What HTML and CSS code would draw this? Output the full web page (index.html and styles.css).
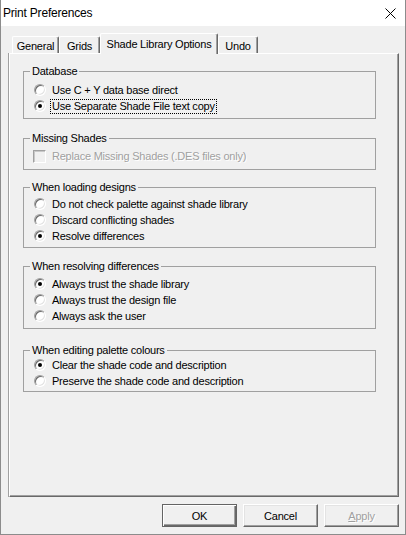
FILE: index.html
```html
<!DOCTYPE html>
<html>
<head>
<meta charset="utf-8">
<link rel="stylesheet" href="styles.css">
</head>
<body>
<div class="window">
  <div class="titlebar">
    <span class="title">Print Preferences</span>
    <svg class="close" width="11" height="11" viewBox="0 0 11 11"><path d="M0.5 0.5 L10.5 10.5 M10.5 0.5 L0.5 10.5" stroke="#000" stroke-width="1" fill="none"/></svg>
  </div>
  <div class="content">
    <div class="tabs">
      <div class="tab w-general">General</div>
      <div class="tab w-grids">Grids</div>
      <div class="tab active w-shade">Shade Library Options</div>
      <div class="tab w-undo">Undo</div>
    </div>
    <div class="panel">
      <fieldset class="group g-db">
        <legend>Database</legend>
        <div class="opts">
          <div class="opt"><span class="radio"></span><span class="lbl">Use C + Y data base direct</span></div>
          <div class="opt"><span class="radio on"></span><span class="lbl focus">Use Separate Shade File text copy</span></div>
        </div>
      </fieldset>
      <fieldset class="group g-missing">
        <legend>Missing Shades</legend>
        <div class="opts">
          <div class="opt"><span class="check"></span><span class="lbl disabled">Replace Missing Shades (.DES files only)</span></div>
        </div>
      </fieldset>
      <fieldset class="group g-load">
        <legend>When loading designs</legend>
        <div class="opts">
          <div class="opt"><span class="radio"></span><span class="lbl">Do not check palette against shade library</span></div>
          <div class="opt"><span class="radio"></span><span class="lbl">Discard conflicting shades</span></div>
          <div class="opt"><span class="radio on"></span><span class="lbl">Resolve differences</span></div>
        </div>
      </fieldset>
      <fieldset class="group g-resolve">
        <legend>When resolving differences</legend>
        <div class="opts">
          <div class="opt"><span class="radio on"></span><span class="lbl">Always trust the shade library</span></div>
          <div class="opt"><span class="radio"></span><span class="lbl">Always trust the design file</span></div>
          <div class="opt"><span class="radio"></span><span class="lbl">Always ask the user</span></div>
        </div>
      </fieldset>
      <fieldset class="group g-edit">
        <legend>When editing palette colours</legend>
        <div class="opts">
          <div class="opt"><span class="radio on"></span><span class="lbl">Clear the shade code and description</span></div>
          <div class="opt"><span class="radio"></span><span class="lbl">Preserve the shade code and description</span></div>
        </div>
      </fieldset>
    </div>
    <div class="buttons">
      <div class="btn default">OK</div>
      <div class="btn">Cancel</div>
      <div class="btn disabled"><span><u>A</u>pply</span></div>
    </div>
  </div>
</div>
</body>
</html>
```
FILE: styles.css
```css
* { box-sizing: border-box; }
body {
  margin: 0;
  background: #fff;
  font-family: "Liberation Sans", Arial, sans-serif;
  font-size: 11px;
  letter-spacing: -0.22px;
  color: #000;
}
.window {
  width: 406px;
  height: 535px;
  background: #f0f0f0;
  border: 1px solid #8c8c8c;
  border-top: none;
  display: flex;
  flex-direction: column;
}
.titlebar {
  height: 26px;
  background: #fff;
  display: flex;
  align-items: center;
  justify-content: space-between;
  padding: 0 9px 0 2px;
  flex: none;
}
.title {
  font-size: 12px;
  letter-spacing: -0.2px;
}
.close { display: block; }
.content {
  flex: 1;
  display: flex;
  flex-direction: column;
  padding: 7px 6px 0 7px;
}
.tabs {
  display: flex;
  align-items: flex-end;
  height: 20px;
  padding-left: 4px;
}
.tab {
  height: 17px;
  border: 1px solid;
  border-color: #fff #696969 transparent #fff;
  border-bottom: none;
  border-radius: 2px 2px 0 0;
  box-shadow: inset -1px 0 0 #a0a0a0;
  display: flex;
  align-items: center;
  justify-content: center;
  padding-top: 1px;
}
.tab.active {
  height: 21px;
  margin-bottom: -1px;
  padding-bottom: 1px;
  position: relative;
  z-index: 1;
  background: #f0f0f0;
}
.w-general { width: 47px; }
.w-grids { width: 41px; }
.w-shade { width: 118px; }
.w-undo { width: 40px; }
.panel {
  height: 444px;
  margin-left: 1px;
  border: 1px solid;
  border-color: #fff #696969 #696969 #fff;
  box-shadow: inset -1px -1px 0 #a0a0a0, -1px 0 0 #a0a0a0;
  padding: 10px 0 0 13px;
}
.group {
  margin: 0;
  padding: 0;
  border: 1px solid #a0a0a0;
  width: 353px;
  min-width: 0;
}
.group legend {
  margin-left: 6px;
  padding: 0 2px;
  line-height: 14px;
}
.opts { padding-left: 10px; }
.g-db .opts { padding-top: 4px; padding-bottom: 4px; }
.g-missing { margin-top: 12px; }
.g-missing .opts { padding-top: 3px; padding-bottom: 5px; }
.g-load { margin-top: 10px; }
.g-load .opts { padding-top: 2px; padding-bottom: 3px; }
.g-resolve { margin-top: 11px; }
.g-resolve .opts { padding-top: 3px; padding-bottom: 4px; }
.g-edit { margin-top: 14px; }
.g-edit .opts { padding-top: 0; padding-bottom: 2px; }
.opt {
  display: flex;
  align-items: center;
  height: 16px;
}
.radio {
  width: 12px;
  height: 12px;
  border-radius: 50%;
  background: #fff;
  border: 1px solid;
  border-color: #a0a0a0 #fff #fff #a0a0a0;
  box-shadow: inset 1px 1px 0 #696969, inset -1px -1px 0 #e3e3e3;
  display: flex;
  align-items: center;
  justify-content: center;
  flex: none;
}
.radio.on::after {
  content: "";
  width: 4px;
  height: 4px;
  border-radius: 50%;
  background: #000;
}
.check {
  width: 13px;
  height: 13px;
  flex: none;
  background: #f0f0f0;
  border: 1px solid;
  border-color: #a0a0a0 #fff #fff #a0a0a0;
  box-shadow: inset 1px 1px 0 #c8c8c8;
  margin-left: -1px;
}
.lbl {
  margin-left: 4px;
  padding: 0 1px;
  border: 1px solid transparent;
  line-height: 13px;
  white-space: nowrap;
}
.lbl.focus { border: 1px dotted #000; }
.lbl.disabled {
  color: #a0a0a0;
  text-shadow: 1px 1px 0 #fff;
}
.buttons {
  display: flex;
  justify-content: flex-end;
  gap: 6px;
  margin-top: 7px;
}
.btn {
  width: 75px;
  height: 23px;
  background: #f0f0f0;
  border: 1px solid;
  border-color: #fff #696969 #696969 #fff;
  box-shadow: inset -1px -1px 0 #a0a0a0, inset 1px 1px 0 #e3e3e3;
  display: flex;
  align-items: center;
  justify-content: center;
}
.btn.default {
  border-color: #646464;
  box-shadow: inset 1px 1px 0 #fff, inset -1px -1px 0 #696969, inset -2px -2px 0 #a0a0a0;
}
.btn.disabled {
  color: #a0a0a0;
  text-shadow: 1px 1px 0 #fff;
}
```
